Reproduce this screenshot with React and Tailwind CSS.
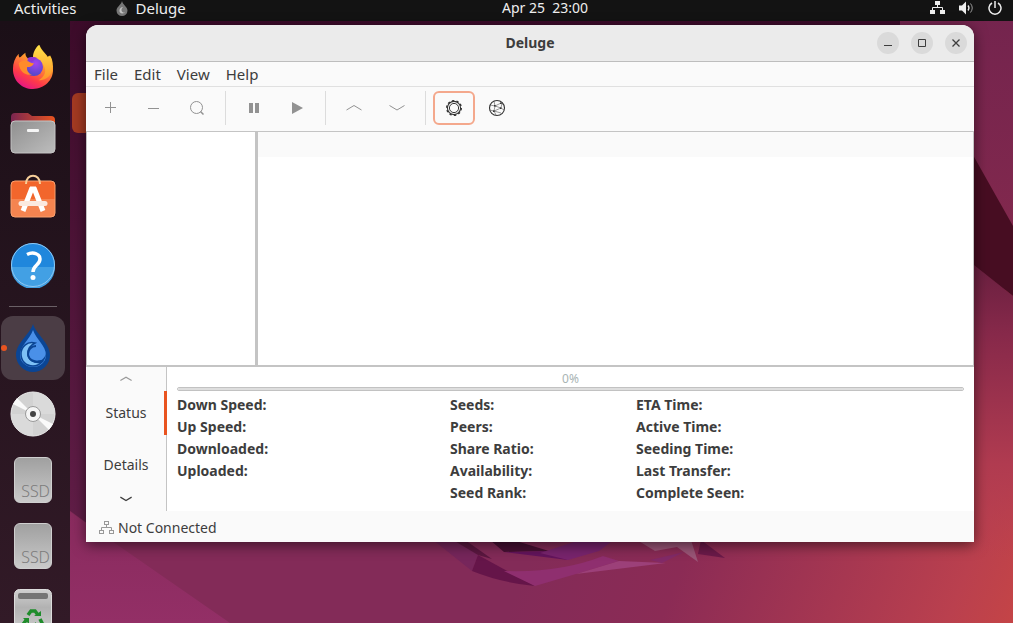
import { useState } from "react";

const STATS = [
  ["Down Speed:", "Up Speed:", "Downloaded:", "Uploaded:"],
  ["Seeds:", "Peers:", "Share Ratio:", "Availability:", "Seed Rank:"],
  ["ETA Time:", "Active Time:", "Seeding Time:", "Last Transfer:", "Complete Seen:"],
];

const MENUS = ["File", "Edit", "View", "Help"];

function Wallpaper() {
  return (
    <svg
      className="absolute inset-0 -z-10 h-full w-full"
      viewBox="0 0 1013 623"
      preserveAspectRatio="none"
      aria-hidden="true"
    >
      <defs>
        <linearGradient id="base" gradientUnits="userSpaceOnUse" x1="560" y1="480" x2="1010" y2="660">
          <stop offset="0" stopColor="#832b58" />
          <stop offset="0.3" stopColor="#8b2b55" />
          <stop offset="0.7" stopColor="#ad3a50" />
          <stop offset="0.85" stopColor="#ba404e" />
          <stop offset="1" stopColor="#c64545" />
        </linearGradient>
        <linearGradient id="left" x1="0" y1="0" x2="0" y2="1">
          <stop offset="0" stopColor="#3b0b29" />
          <stop offset="1" stopColor="#621e48" />
        </linearGradient>
        <linearGradient id="right" x1="0" y1="0" x2="0" y2="1">
          <stop offset="0" stopColor="#73244e" />
          <stop offset="1" stopColor="#85294d" />
        </linearGradient>
        <linearGradient id="glow" x1="0" y1="0" x2="0" y2="1">
          <stop offset="0" stopColor="#5e1c3c" />
          <stop offset="0.3" stopColor="#87294a" />
          <stop offset="0.7" stopColor="#b03b50" />
          <stop offset="1" stopColor="#b83f50" stopOpacity="0" />
        </linearGradient>
        <linearGradient id="corner" x1="0" y1="0" x2="0" y2="1">
          <stop offset="0" stopColor="#84295a" />
          <stop offset="1" stopColor="#932f66" />
        </linearGradient>
      </defs>
      <rect width="1013" height="623" fill="url(#base)" />
      <path d="M0 0H900V300L300 540H110L0 460z" fill="url(#left)" />
      <path d="M0 458L70 512L230 623H0z" fill="url(#corner)" />
      <path d="M900 0H1013V290H900z" fill="url(#right)" />
      <path d="M940 238L1013 296V560H940z" fill="url(#glow)" />
      <path d="M960 132L1013 226V296L960 254z" fill="#470d22" />
      <path d="M433 540H465L478 555L472 571z" fill="#76265b" />
      <path d="M453 540H465L492 559L478 555z" fill="#5b1740" />
      <path d="M478 555L535 586Q502 583 472 571z" fill="#651549" />
      <path d="M504 571Q560 573 603 556L619 561L576 574L535 586z" fill="#8f2f6f" />
      <path d="M619 561L666 563L576 574z" fill="#9c4079" />
      <path d="M490 540H513L549 551L504 552z" fill="#471033" />
      <path d="M504 552L552 551L568 560z" fill="#63145c" />
      <path d="M574 542H611L599 551L568 560L540 553z" fill="#78246d" />
      <path d="M637 540H691L698 562L677 547L655 551z" fill="#9a5577" />
      <path d="M701 540L725 558L698 554z" fill="#6b1a49" />
      <path d="M684 552L662 563L650 560z" fill="#822a67" />
    </svg>
  );
}

function FirefoxIcon() {
  return (
    <svg viewBox="0 0 44 46" className="h-11 w-[42px]">
      <defs>
        <linearGradient id="ff" x1="0.8" y1="0" x2="0.3" y2="1">
          <stop offset="0" stopColor="#ffe63d" />
          <stop offset="0.4" stopColor="#ff9a2e" />
          <stop offset="0.75" stopColor="#ff3b48" />
          <stop offset="1" stopColor="#e31587" />
        </linearGradient>
        <linearGradient id="ffy" x1="0.5" y1="0" x2="0.5" y2="1">
          <stop offset="0" stopColor="#ffe44a" />
          <stop offset="1" stopColor="#ff9328" />
        </linearGradient>
        <radialGradient id="ffp" cx="0.6" cy="0.3" r="0.7">
          <stop offset="0" stopColor="#a443f0" />
          <stop offset="1" stopColor="#5148c8" />
        </radialGradient>
      </defs>
      <path
        d="M1 25c0-6 2-12 6-16 0 2 0 3 1 4 2-1 3-3 6-5 0 3 1 5 3 6h8c-3-6 0-11 4-14 1 5 6 8 9 13l2-2c3 5 3 10 3 15 0 11-9 20-21 20S1 37 1 25z"
        fill="url(#ff)"
      />
      <path
        d="M22 13c0-6 3-10 6-13 1 5 6 8 9 13l2-2c3 5 4 12 2 18-2 5-7 8-13 8 6-4 9-9 5-16-3-5-6-7-11-8z"
        fill="url(#ffy)"
      />
      <circle cx="23" cy="23" r="9.500" fill="url(#ffp)" />
      <path d="M7 19c3-3 7-3 10-2 2 2 5 2 6 2-1 3-4 4-7 4-1 3 1 7 5 8-7 1-13-3-14-12z" fill="#ff8b2a" />
      <path d="M16 14c3-2 8-2 11 0-2 0-4 1-5 3-2 1-5 0-6-3z" fill="#9034d6" />
    </svg>
  );
}

function FilesIcon() {
  return (
    <svg viewBox="0 0 46 42" className="h-[42px] w-[46px]">
      <defs>
        <linearGradient id="fold" x1="0" y1="0" x2="1" y2="0">
          <stop offset="0" stopColor="#7a2550" />
          <stop offset="1" stopColor="#e95420" />
        </linearGradient>
        <linearGradient id="foldf" x1="0" y1="0" x2="1" y2="1">
          <stop offset="0" stopColor="#8f8f8f" />
          <stop offset="1" stopColor="#bdbdbd" />
        </linearGradient>
      </defs>
      <path d="M1 5a4 4 0 0 1 4-4h13l4 3h19a4 4 0 0 1 4 4v14H1z" fill="url(#fold)" />
      <rect x="1" y="9" width="44" height="32" rx="4" fill="url(#foldf)" stroke="#c4c4c4" />
      <rect x="17" y="17" width="12" height="3" rx="1" fill="#f5f5f5" />
    </svg>
  );
}

function SoftwareIcon() {
  return (
    <svg viewBox="0 0 46 52" className="h-13 w-[46px]">
      <rect x="1" y="8" width="44" height="36" rx="4" fill="#f2662c" />
      <path d="M1 26h44v14a4 4 0 0 1-4 4H5a4 4 0 0 1-4-4z" fill="#f58450" />
      <rect x="1" y="8" width="44" height="36" rx="4" fill="none" stroke="#f9a06f" />
      <path d="M16 11c0-11 14-11 14 0" fill="none" stroke="#f7cf9a" strokeWidth="2" />
      <path d="M22 15L13 38M24 15l9 23" stroke="#fff" strokeWidth="5" />
      <path d="M20 15h6" stroke="#fff" strokeWidth="3" />
      <path d="M11 30.500h24" stroke="#fbe9df" strokeWidth="5" strokeLinecap="round" />
    </svg>
  );
}

function HelpIcon() {
  return (
    <svg viewBox="0 0 46 46" className="h-[46px] w-[46px]">
      <circle cx="23" cy="23" r="22" fill="#2087dc" />
      <path d="M1 25a22 22 0 0 0 44 0z" fill="#42a0e4" />
      <circle cx="23" cy="23" r="21.500" fill="none" stroke="#8fc8f2" />
      <path d="M17 12.500c6-3 13-1 13 4.500 0 6-7 6-7 13" fill="none" stroke="#fff" strokeWidth="3.500" />
      <circle cx="23" cy="35.500" r="2.500" fill="#fff" />
    </svg>
  );
}

function DelugeIcon() {
  return (
    <svg viewBox="0 0 34 48" className="h-12 w-[34px]">
      <path d="M17 0C14 10 0 19 0 31a17 17 0 0 0 34 0C34 19 20 10 17 0z" fill="#0b4594" />
      <path d="M17 6C14 15 4 22 4 31a13 12 0 0 0 26 0C30 22 20 15 17 6z" fill="#4a90e8" />
      <path d="M30 29c-1 5-5 9-9 7 2 2 3 2 5 2 2-1 4-4 4-9z" fill="#0b4594" />
      <path d="M19 19C11 17 5 23 5 30c0 7 5 12 12 12 4 0 7-2 9-4-8 2-14-2-14-9 0-5 3-8 7-10z" fill="#7ec1f5" stroke="#0b4594" strokeWidth="1.500" />
      <path d="M20 22c-5 0-8 4-8 8 0 6 7 9 14 7" fill="none" stroke="#0b4594" strokeWidth="2" />
    </svg>
  );
}

function DiscIcon() {
  return (
    <svg viewBox="0 0 46 46" className="h-[46px] w-[46px]">
      <circle cx="23" cy="23" r="22" fill="#d2d2d2" stroke="#eee" />
      <path d="M23 23V1a22 22 0 0 1 22 22z" fill="#dadada" />
      <path d="M23 23v22A22 22 0 0 1 1 23z" fill="#dadada" />
      <path d="M23 23L3 13l4-6zM23 23l20 10-4 6z" fill="#fafafa" />
      <circle cx="23" cy="23" r="7.500" fill="#f5f5f5" stroke="#9a9a9a" />
      <circle cx="23" cy="23" r="3" fill="#444" />
    </svg>
  );
}

function SsdIcon() {
  return (
    <span className="flex h-[46px] w-[38px] items-end justify-end overflow-hidden rounded-md border border-[#cfcfcf] bg-linear-to-b from-[#a0a0a0] to-[#cacaca] pr-px pb-px text-base leading-5 font-light text-[#7c7c7c]">
      SSD
    </span>
  );
}

function TrashIcon() {
  return (
    <svg viewBox="0 0 38 46" className="h-[46px] w-[38px]">
      <defs>
        <linearGradient id="bin" x1="0" y1="0" x2="0" y2="1">
          <stop offset="0" stopColor="#d0d0d0" />
          <stop offset="0.4" stopColor="#b2b2b2" />
          <stop offset="1" stopColor="#d0d0d0" />
        </linearGradient>
      </defs>
      <rect x="0.500" y="0.500" width="37" height="45" rx="5" fill="url(#bin)" stroke="#dcdcdc" />
      <rect x="4" y="4" width="30" height="6" rx="2" fill="#757575" />
      <g fill="none" stroke="#1f8c2b" strokeWidth="3.500">
        <path d="M14 26l3-4h4l3 4" />
        <path d="M26 30l2 4-2 3h-4" />
        <path d="M17 37h-5l-2-3 3-4" />
      </g>
      <path d="M20 27h7l0-5zM22 33v8l-4-4zM9 29h6v6z" fill="#1f8c2b" />
    </svg>
  );
}

function NetworkIcon({ filled, className = "" }) {
  return (
    <svg
      viewBox="0 0 15 14"
      className={`h-3.5 w-[15px] ${className}`}
      fill={filled ? "currentColor" : "none"}
      stroke="currentColor"
      aria-hidden="true"
    >
      <rect x="5.500" y="0.500" width="4" height="3" />
      <rect x="0.500" y="9.500" width="4" height="3" />
      <rect x="10.500" y="9.500" width="4" height="3" />
      <path d="M7.500 4v3M2.500 9V6.500h10V9" fill="none" />
    </svg>
  );
}

function Chevron({ up, wide }) {
  return (
    <svg viewBox="0 0 16 8" className={wide ? "h-2 w-4" : "h-1.5 w-3"} fill="none" stroke="currentColor" aria-hidden="true">
      <path d={up ? "M0.500 6L8 1.500L15.500 6" : "M0.500 1.500L8 6L15.500 1.500"} strokeWidth={wide ? 1 : 1.6} />
    </svg>
  );
}

// Ten teeth: the dash period is a tenth of the ring's circumference
function Gear() {
  return (
    <svg viewBox="0 0 18 18" className="h-[18px] w-[18px]" fill="none" stroke="#353535" aria-hidden="true">
      <circle cx="9" cy="9" r="6.600" strokeWidth="1.100" />
      <circle cx="9" cy="9" r="4.600" />
      <circle cx="9" cy="9" r="7.300" strokeWidth="1.400" strokeDasharray="2.300 2.287" />
    </svg>
  );
}

function Globe() {
  return (
    <svg viewBox="0 0 18 18" className="h-[18px] w-[18px]" fill="none" stroke="#353535" aria-hidden="true">
      <circle cx="9" cy="9" r="7.500" strokeWidth="1.100" />
      <path d="M2 6l5 1 6-3 3 2M7 7l-1 5 7-3 1-5M1.500 11l4.500 1 2 4M6 2l1 5 6 2 3 2M6 12l7 2" strokeWidth="0.500" />
      <path d="M6 6h1.500v1.500H6zM12 8.500h1.500V10H12zM5 11.500h1.500V13H5zM12 3.500h1.500V5H12z" fill="#353535" stroke="none" />
    </svg>
  );
}

const DOCK_APPS = [
  { name: "Firefox", Icon: FirefoxIcon },
  { name: "Files", Icon: FilesIcon },
  { name: "Ubuntu Software", Icon: SoftwareIcon },
  { name: "Help", Icon: HelpIcon },
];

const DOCK_RUNNING = [
  { name: "Deluge", Icon: DelugeIcon, active: true },
  { name: "Disc", Icon: DiscIcon },
  { name: "Drive 1", Icon: SsdIcon },
  { name: "Drive 2", Icon: SsdIcon },
  { name: "Trash", Icon: TrashIcon },
];

function DockButton({ name, Icon, active }) {
  return (
    <button
      aria-label={name}
      className={`relative flex h-16 w-16 shrink-0 items-center justify-center rounded-xl ${active ? "bg-[#4b3d45]" : ""}`}
    >
      {active && <span className="absolute top-[29px] left-0 h-1.5 w-1.5 rounded-full bg-[#e95420]" />}
      <Icon />
    </button>
  );
}

function Dock() {
  return (
    <nav className="flex w-[70px] shrink-0 flex-col gap-0.5 overflow-hidden bg-linear-to-b from-[#1b0f17] to-[#321a27] pt-3.5 pl-px">
      {DOCK_APPS.map((app) => (
        <DockButton key={app.name} {...app} />
      ))}
      <hr className="mx-2 my-[7px] w-12 border-[#6a6066]" />
      {DOCK_RUNNING.map((app) => (
        <DockButton key={app.name} {...app} />
      ))}
    </nav>
  );
}

function TopBar() {
  return (
    <header className="grid h-[21px] shrink-0 grid-cols-[1fr_auto_1fr] items-center bg-[#131313] pr-[11px] pb-1.5 pl-3.5 text-[15px] leading-4 text-[#eeeeee]">
      <div className="flex items-center gap-[39px]">
        <button>Activities</button>
        <button className="flex items-center gap-2">
          <svg viewBox="0 0 12 15" className="h-[15px] w-3" aria-hidden="true">
            <path d="M6 0C5 4 0.500 6 0.500 9.500a5.500 5.500 0 0 0 11 0C11.500 6 7 4 6 0z" fill="#777" />
            <path d="M7 6C3 6 2 12 6 12.500c2 0 3-1 3-1-3 1-5-3-2-5.500z" fill="#c4c4c4" />
          </svg>
          Deluge
        </button>
      </div>
      <time className="pl-[74px] text-sm leading-4 whitespace-pre">Apr 25  23:00</time>
      <div className="flex items-center justify-end gap-3.5">
        <NetworkIcon filled />
        <svg viewBox="0 0 15 14" className="h-3.5 w-[15px]" fill="none" stroke="#eee" aria-hidden="true">
          <path d="M0 4.500h3L7 0.500v13L3 9.500H0z" fill="#eee" stroke="none" />
          <path d="M9 4.500q2 2.500 0 5" strokeWidth="1.300" />
          <path d="M11.500 2.500q3.500 4.500 0 9" stroke="#999" />
        </svg>
        <svg viewBox="0 0 14 14" className="h-3.5 w-3.5" fill="none" stroke="#eee" strokeWidth="1.500" aria-hidden="true">
          <path d="M4 2a6 6 0 1 0 6 0M7 0v7" />
        </svg>
      </div>
    </header>
  );
}

function ToolButton({ label, active, children }) {
  return (
    <button
      aria-label={label}
      className={`flex h-[34px] w-[42px] items-center justify-center rounded-md text-[#929292] ${
        active ? "border-2 border-[#f4a88c]" : ""
      }`}
    >
      {children}
    </button>
  );
}

function ToolSeparator() {
  return <span className="mx-1.5 h-[34px] w-px bg-[#dcdcdc]" />;
}

function Toolbar() {
  return (
    <div role="toolbar" className="flex gap-px border-b border-[#c4c4c4] px-1 pt-1 pb-1.5">
      <ToolButton label="Add torrent">
        <svg viewBox="0 0 12 12" className="h-3 w-3" stroke="currentColor">
          <path d="M0 5.500h11M5.500 0v11" />
        </svg>
      </ToolButton>
      <ToolButton label="Remove torrent">
        <svg viewBox="0 0 12 12" className="h-3 w-3" stroke="currentColor">
          <path d="M0 6.500h11" />
        </svg>
      </ToolButton>
      <ToolButton label="Filter">
        <svg viewBox="0 0 14 14" className="h-3.5 w-3.5" fill="none" stroke="currentColor">
          <circle cx="6.500" cy="6.500" r="6" />
          <path d="M10.500 10.500l3 3" strokeWidth="1.500" />
        </svg>
      </ToolButton>
      <ToolSeparator />
      <ToolButton label="Pause">
        <svg viewBox="0 0 10 10" className="h-2.5 w-2.5" fill="currentColor">
          <path d="M0 0h4v10H0zM6 0h4v10H6z" />
        </svg>
      </ToolButton>
      <ToolButton label="Resume">
        <svg viewBox="0 0 11 12" className="h-3 w-[11px]" fill="currentColor">
          <path d="M0 0l11 6-11 6z" />
        </svg>
      </ToolButton>
      <ToolSeparator />
      <ToolButton label="Queue up">
        <Chevron up wide />
      </ToolButton>
      <ToolButton label="Queue down">
        <Chevron wide />
      </ToolButton>
      <ToolSeparator />
      <ToolButton label="Preferences" active>
        <Gear />
      </ToolButton>
      <ToolButton label="Connection manager">
        <Globe />
      </ToolButton>
    </div>
  );
}

function TitleBar() {
  return (
    <div className="grid h-[37px] grid-cols-[1fr_auto_1fr] items-center border-b border-[#bdbdbd] bg-[#ebebeb] px-[7px]">
      <span />
      <h1 className="text-sm font-bold">Deluge</h1>
      <div className="flex justify-end gap-3">
        <button aria-label="Minimize" className="flex h-[22px] w-[22px] items-center justify-center rounded-full bg-[#dadada]">
          <svg viewBox="0 0 8 8" className="h-2 w-2" stroke="currentColor">
            <path d="M0 6.500h8" />
          </svg>
        </button>
        <button aria-label="Maximize" className="flex h-[22px] w-[22px] items-center justify-center rounded-full bg-[#dadada]">
          <svg viewBox="0 0 8 8" className="h-2 w-2" fill="none" stroke="currentColor">
            <path d="M0.500 0.500h7v7h-7z" />
          </svg>
        </button>
        <button aria-label="Close" className="flex h-[22px] w-[22px] items-center justify-center rounded-full bg-[#dadada]">
          <svg viewBox="0 0 8 8" className="h-2 w-2" stroke="currentColor" strokeWidth="1.300">
            <path d="M0.500 0.500l7 7M7.500 0.500l-7 7" />
          </svg>
        </button>
      </div>
    </div>
  );
}

function DetailsPane() {
  const [tab, setTab] = useState("Status");

  return (
    <div className="flex h-36 shrink-0">
      <div role="tablist" className="flex w-[81px] shrink-0 flex-col border-r border-[#c4c4c4]">
        <button aria-label="Scroll up" className="flex h-6 items-center justify-center text-[#9a9a9a]">
          <Chevron up />
        </button>
        <div className="-mr-px flex flex-col gap-2">
          {["Status", "Details"].map((name) => (
            <button
              key={name}
              role="tab"
              aria-selected={tab === name}
              onClick={() => setTab(name)}
              className={`h-11 border-r-3 pl-0.5 text-sm ${tab === name ? "border-[#e95420]" : "border-transparent"}`}
            >
              {name}
            </button>
          ))}
        </div>
        <button aria-label="Scroll down" className="flex h-6 items-center justify-center">
          <Chevron />
        </button>
      </div>
      <div className="flex-1 bg-white px-2.5">
        <label htmlFor="torrent-progress" className="block h-5 pt-1 text-center text-xs leading-4 text-[#a9b4b4]">
          0%
        </label>
        <progress
          id="torrent-progress"
          value={0}
          max={100}
          className="block h-1 w-full appearance-none overflow-hidden rounded-full border border-[#c2c2c2] [&::-webkit-progress-bar]:bg-[#dedede]"
        />
        <div className="grid grid-cols-[273fr_186fr_328fr] pt-[3px] text-sm leading-[22px] font-bold">
          {STATS.map((column) => (
            <dl key={column[0]}>
              {column.map((label) => (
                <dt key={label}>{label}</dt>
              ))}
            </dl>
          ))}
        </div>
      </div>
    </div>
  );
}

function DelugeWindow() {
  return (
    <main className="flex flex-1 flex-col overflow-hidden rounded-t-xl bg-[#fafafa] text-[#3d3d3d] shadow-[0_3px_14px_rgba(0,0,0,0.55)]">
      <TitleBar />
      <div role="menubar" className="flex h-[25px] items-center gap-4 border-b border-[#e0e0e0] px-2 text-[15px] leading-5">
        {MENUS.map((menu) => (
          <button key={menu} role="menuitem">
            {menu}
          </button>
        ))}
      </div>
      <Toolbar />
      <div className="flex min-h-0 flex-1 border-x border-b-2 border-[#c4c4c4] bg-white">
        <aside className="w-[171px] shrink-0 border-r-3 border-[#c4c4c4]" />
        <section className="flex-1">
          <div className="h-[25px] bg-[#fafafa]" />
        </section>
      </div>
      <DetailsPane />
      <footer className="flex h-[31px] shrink-0 items-center gap-1 px-[13px] pt-0.5 text-sm">
        <NetworkIcon className="text-[#999999]" />
        Not Connected
      </footer>
    </main>
  );
}

export default function App() {
  return (
    <div className="relative isolate flex h-screen flex-col overflow-hidden font-['Noto_Sans','Open_Sans',sans-serif]">
      <Wallpaper />
      <TopBar />
      <div className="flex min-h-0 flex-1">
        <Dock />
        <div className="relative flex flex-1 pt-1 pr-[39px] pb-[81px] pl-4">
          {/* Selected desktop icon, mostly hidden behind the window */}
          <span className="absolute top-[72px] left-0.5 -z-10 h-10 w-16 rounded-md bg-[#a43a22]" />
          <DelugeWindow />
        </div>
      </div>
    </div>
  );
}
